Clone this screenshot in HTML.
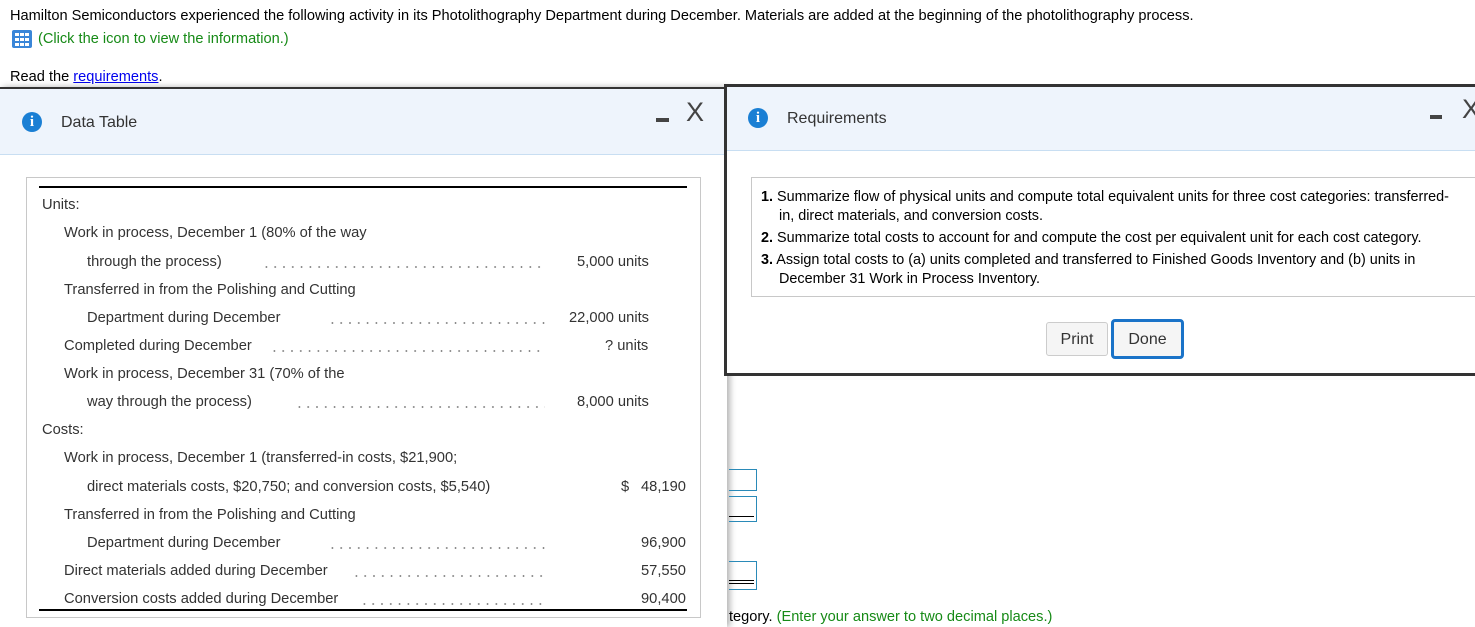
<!DOCTYPE html>
<html><head><meta charset="utf-8"><style>
*{margin:0;padding:0;box-sizing:border-box}
body{width:1475px;height:623px;overflow:hidden;background:#fff;font-family:"Liberation Sans",Arial,sans-serif;font-size:15px;color:#000;position:relative}
.a{position:absolute;white-space:nowrap}
.g{color:#333;font-size:14.7px}
.dots{position:absolute;height:2px;background-image:radial-gradient(circle,#888 0.8px,transparent 1px);background-size:8.8px 2px;background-repeat:repeat-x}
.info{position:absolute;width:20px;height:20px;border-radius:50%;background:#1a7fd4;color:#fff;font:bold 15px "Liberation Serif",serif;text-align:center;line-height:20px}
</style></head><body>
<div class="a" style="left:10px;top:8px;font-size:14.6px">Hamilton Semiconductors experienced the following activity in its Photolithography Department during December. Materials are added at the beginning of the photolithography process.</div>
<svg class="a" style="left:12px;top:30px" width="20" height="18"><rect x="0" y="0" width="20" height="18" rx="2" fill="#3a86d8"/><g fill="#fff"><rect x="3" y="3" width="4" height="3"/><rect x="8" y="3" width="4" height="3"/><rect x="13" y="3" width="4" height="3"/><rect x="3" y="8" width="4" height="3"/><rect x="8" y="8" width="4" height="3"/><rect x="13" y="8" width="4" height="3"/><rect x="3" y="13" width="4" height="3"/><rect x="8" y="13" width="4" height="3"/><rect x="13" y="13" width="4" height="3"/></g></svg>
<div class="a" style="left:38px;top:31px;color:#168a16;font-size:14.6px">(Click the icon to view the information.)</div>
<div class="a" style="left:10px;top:69px;font-size:14.6px">Read the <span style="color:#00e;text-decoration:underline">requirements</span>.</div>

<div class="a" style="left:0;top:87px;width:727px;height:540px;border-top:2px solid #333;background:#fff;box-shadow:3px 0 6px rgba(0,0,0,.3)"></div>
<div class="a" style="left:0;top:89px;width:724px;height:66px;background:#eef4fc;border-bottom:1px solid #c8def2"></div>
<div class="info" style="left:22px;top:112px">i</div>
<div class="a" style="left:61px;top:114px;font-size:16px;color:#333">Data Table</div>
<div class="a" style="left:656px;top:118px;width:13px;height:4px;background:#444"></div>
<div class="a" style="left:686px;top:97px;font-size:27px;color:#444">X</div>
<div class="a" style="left:26px;top:177px;width:675px;height:441px;border:1px solid #c8c8c8"></div>
<div class="a" style="left:39px;top:186px;width:648px;height:2px;background:#000"></div>
<div class="a" style="left:39px;top:609px;width:648px;height:2px;background:#000"></div>
<div class="g">
<div class="a" style="left:42px;top:197px">Units:</div>
<div class="a" style="left:64px;top:225px">Work in process, December 1 (80% of the way</div>
<div class="a" style="left:87px;top:254px">through the process)</div><div class="dots" style="left:262px;top:266px;width:283px"></div><div class="a" style="left:577px;top:254px">5,000 units</div>
<div class="a" style="left:64px;top:282px">Transferred in from the Polishing and Cutting</div>
<div class="a" style="left:87px;top:310px">Department during December</div><div class="dots" style="left:328px;top:322px;width:217px"></div><div class="a" style="left:569px;top:310px">22,000 units</div>
<div class="a" style="left:64px;top:338px">Completed during December</div><div class="dots" style="left:270px;top:350px;width:275px"></div><div class="a" style="left:605px;top:338px">? units</div>
<div class="a" style="left:64px;top:366px">Work in process, December 31 (70% of the</div>
<div class="a" style="left:87px;top:394px">way through the process)</div><div class="dots" style="left:295px;top:406px;width:250px"></div><div class="a" style="left:577px;top:394px">8,000 units</div>
<div class="a" style="left:42px;top:422px">Costs:</div>
<div class="a" style="left:64px;top:450px">Work in process, December 1 (transferred-in costs, $21,900;</div>
<div class="a" style="left:87px;top:479px">direct materials costs, $20,750; and conversion costs, $5,540)</div><div class="a" style="left:621px;top:479px">$</div><div class="a" style="left:641px;top:479px">48,190</div>
<div class="a" style="left:64px;top:507px">Transferred in from the Polishing and Cutting</div>
<div class="a" style="left:87px;top:535px">Department during December</div><div class="dots" style="left:328px;top:547px;width:217px"></div><div class="a" style="left:641px;top:535px">96,900</div>
<div class="a" style="left:64px;top:563px">Direct materials added during December</div><div class="dots" style="left:352px;top:575px;width:193px"></div><div class="a" style="left:641px;top:563px">57,550</div>
<div class="a" style="left:64px;top:591px">Conversion costs added during December</div><div class="dots" style="left:360px;top:603px;width:185px"></div><div class="a" style="left:641px;top:591px">90,400</div>
</div>

<div class="a" style="left:729px;top:469px;width:28px;height:22px;border:1px solid #2a8ab8;border-left:none"></div>
<div class="a" style="left:729px;top:496px;width:28px;height:26px;border:1px solid #2a8ab8;border-left:none"></div>
<div class="a" style="left:729px;top:516px;width:25px;height:1px;background:#000"></div>
<div class="a" style="left:729px;top:561px;width:28px;height:29px;border:1px solid #2a8ab8;border-left:none"></div>
<div class="a" style="left:729px;top:580px;width:25px;height:4px;border-top:1px solid #000;border-bottom:1px solid #000"></div>
<div class="a" style="left:729px;top:609px;font-size:14.6px;width:340px;overflow:hidden">tegory. <span style="color:#168a16">(Enter your answer to two decimal places.)</span></div>

<div class="a" style="left:724px;top:84px;width:760px;height:292px;border:3px solid #333;border-right:none;background:#fff"></div>
<div class="a" style="left:727px;top:87px;width:750px;height:64px;background:#eef4fc;border-bottom:1px solid #c8def2"></div>
<div class="info" style="left:748px;top:108px">i</div>
<div class="a" style="left:787px;top:110px;font-size:16px;color:#333">Requirements</div>
<div class="a" style="left:1430px;top:115px;width:12px;height:4px;background:#444"></div>
<div class="a" style="left:1462px;top:94px;font-size:27px;color:#444">X</div>
<div class="a" style="left:751px;top:177px;width:730px;height:120px;border:1px solid #c8c8c8"></div>
<div class="a" style="left:761px;top:188px;font-size:14.4px;line-height:19px;white-space:normal;width:698px">
<div style="padding-left:18px;text-indent:-18px"><b>1.</b> Summarize flow of physical units and compute total equivalent units for three cost categories: transferred-in, direct materials, and conversion costs.</div>
<div style="padding-left:18px;text-indent:-18px;margin-top:3px"><b>2.</b> Summarize total costs to account for and compute the cost per equivalent unit for each cost category.</div>
<div style="padding-left:18px;text-indent:-18px;margin-top:3px;width:690px"><b>3.</b> Assign total costs to (a) units completed and transferred to Finished Goods Inventory and (b) units in December 31 Work in Process Inventory.</div>
</div>
<div class="a" style="left:1046px;top:322px;width:62px;height:34px;border:1px solid #ccc;border-radius:3px;background:#f5f5f5;text-align:center;line-height:33px;font-size:16px;color:#333">Print</div>
<div class="a" style="left:1111px;top:319px;width:73px;height:40px;border:3px solid #1a73c8;border-radius:4px;background:#f5f5f5;text-align:center;line-height:35px;font-size:16px;color:#333">Done</div>
</body></html>
